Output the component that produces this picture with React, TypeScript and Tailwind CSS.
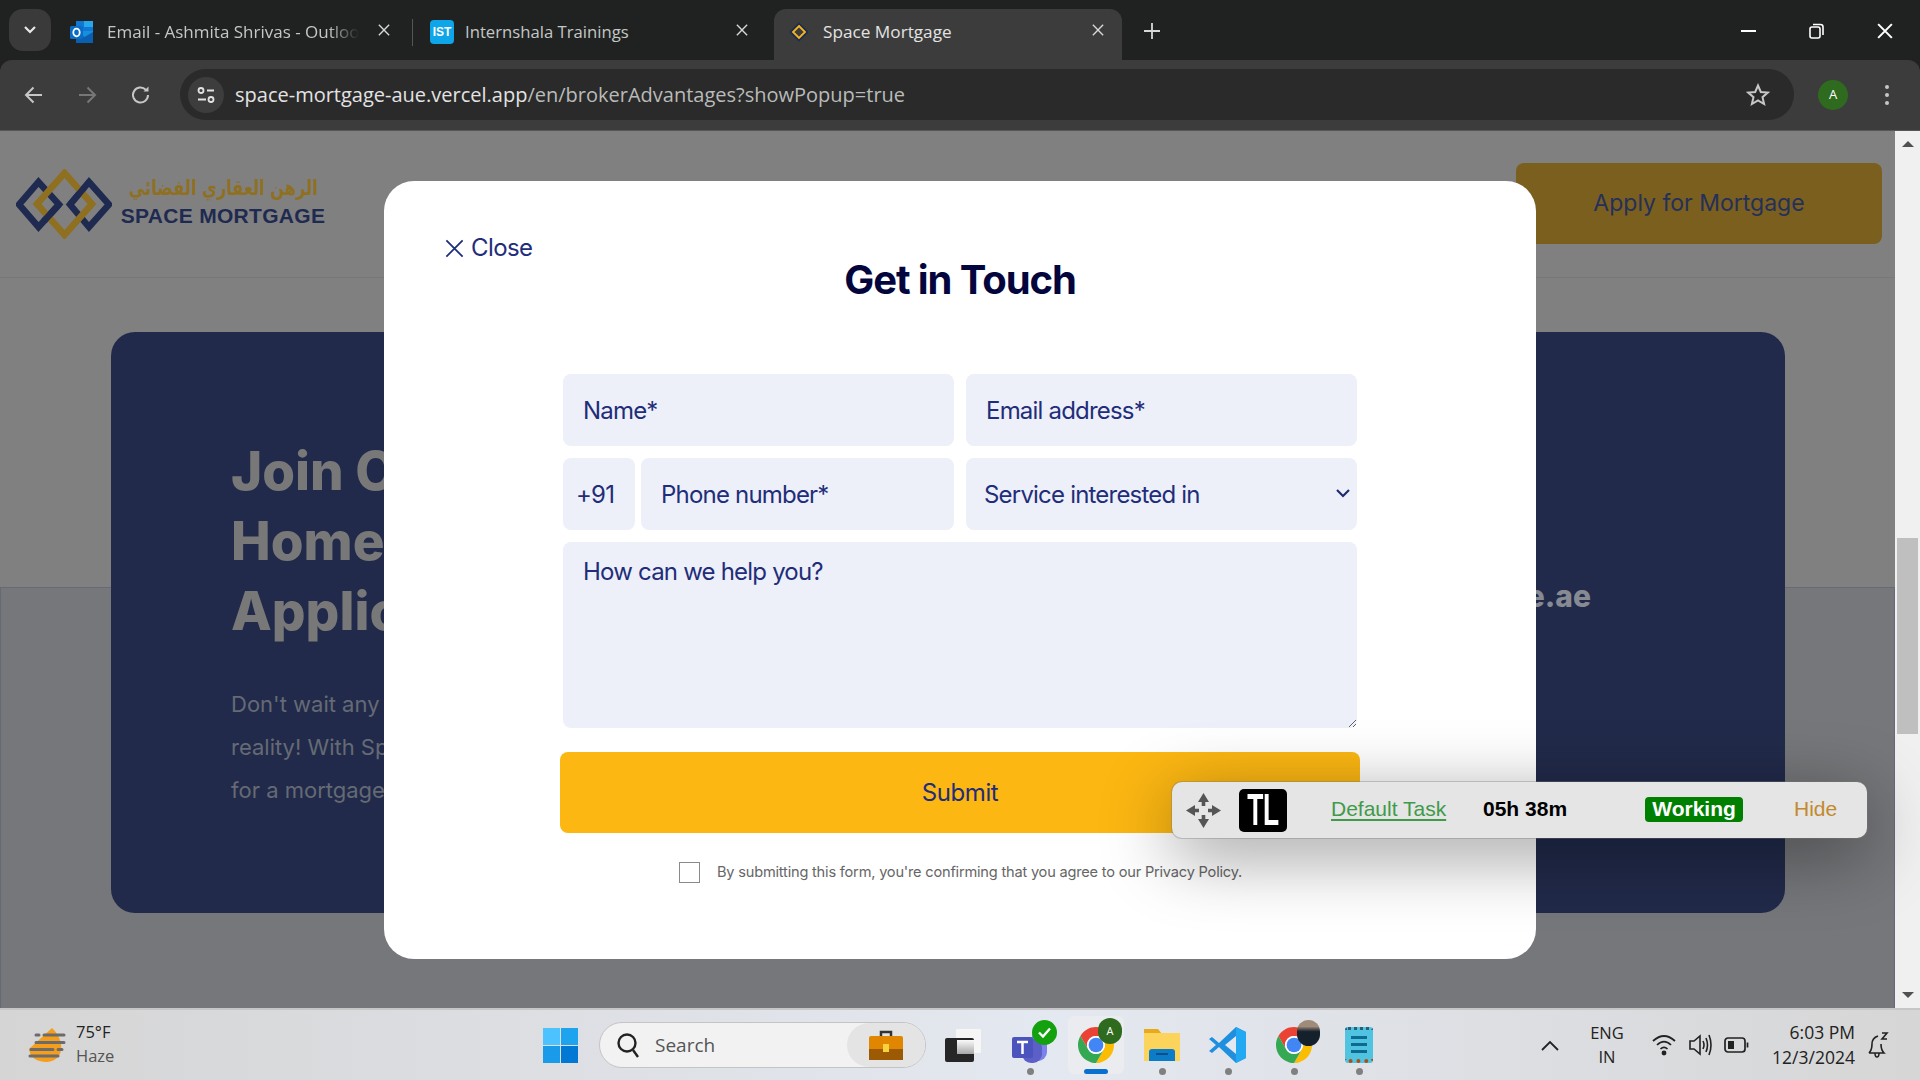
import React from "react";

const ui = "font-['Open_Sans','Noto_Sans',sans-serif]";

function Chrome({ size = 36 }: { size?: number }) {
  return (
    <svg width={size} height={size} viewBox="2 2 44 44">
      <path fill="#EA4335" d="M4.95 13A22 22 0 0 1 43.05 13L24 13A11 11 0 0 0 14.47 29.5Z" />
      <path fill="#FBBC04" d="M43.05 13A22 22 0 0 1 24 46L33.53 29.5A11 11 0 0 0 24 13Z" />
      <path fill="#34A853" d="M24 46A22 22 0 0 1 4.95 13L14.47 29.5A11 11 0 0 0 33.53 29.5Z" />
      <circle cx="24" cy="24" r="11" fill="#fff" />
      <circle cx="24" cy="24" r="9" fill="#4285F4" />
    </svg>
  );
}

function X({ size = 14, color = "#d8d8d8", w = 1.6 }: { size?: number; color?: string; w?: number }) {
  return (
    <svg width={size} height={size} viewBox="0 0 14 14" fill="none" stroke={color} strokeWidth={w}>
      <path d="M1 1 13 13M13 1 1 13" />
    </svg>
  );
}

function Outlook() {
  return (
    <svg width="26" height="26" viewBox="0 0 26 26">
      <rect x="7" y="2" width="17" height="11" fill="#0f78d4" />
      <rect x="15" y="2" width="9" height="6" fill="#28a8ea" />
      <path d="M7 12 24 12 24 23 7 23Z" fill="#1490df" />
      <path d="M7 13 15.5 18 24 13 24 24 7 24Z" fill="#0a5fb0" />
      <rect x="1" y="7" width="13" height="13" rx="1.5" fill="#0a6cc4" />
      <ellipse cx="7.5" cy="13.5" rx="3.2" ry="3.8" fill="none" stroke="#fff" strokeWidth="1.8" />
    </svg>
  );
}

function Tabs() {
  return (
    <div className={`flex h-[60px] shrink-0 items-end bg-[#202222] pl-[9px] ${ui}`}>
      <div className="mb-[9px] flex h-[42px] w-[42px] items-center justify-center rounded-[14px] bg-[#3a3a3a]">
        <svg width="14" height="10" viewBox="0 0 14 10" fill="none" stroke="#e8e8e8" strokeWidth="2.2">
          <path d="M2 2 7 7 12 2" />
        </svg>
      </div>
      <div className="flex h-[51px] w-[361px] items-center pb-[6px] pl-[18px]">
        <div className="flex items-center gap-[12px]">
          <Outlook />
          <span className="w-[252px] overflow-hidden text-[17px] whitespace-nowrap text-[#c4c7c5] [mask-image:linear-gradient(to_right,black_88%,transparent)]">
            Email - Ashmita Shrivas - Outlook
          </span>
        </div>
        <div className="mb-[3px] ml-[19px]"><X size={12} /></div>
      </div>
      <div className="mb-[14px] h-[27px] w-px bg-[#555]" />
      <div className="flex h-[51px] w-[361px] items-center pb-[6px] pl-[17px]">
        <div className="flex h-[24px] w-[24px] items-center justify-center rounded-[4px] bg-[#0ea5e9] text-[12px] font-bold text-white font-['Liberation_Sans',sans-serif]">
          IST
        </div>
        <span className="ml-[11px] w-[271px] text-[16.700px] whitespace-nowrap text-[#c4c7c5]">Internshala Trainings</span>
        <div className="mb-[3px]"><X size={12} /></div>
      </div>
      <div className="flex h-[51px] w-[348px] items-center rounded-t-[12px] bg-[#3c3c3c] pb-[6px] pl-[15px]">
        <svg width="20" height="20" viewBox="0 0 20 20" fill="none">
          <path d="M10 2 18 10 10 18 2 10Z" stroke="#1f2a50" strokeWidth="2.4" />
          <path d="M10 4 16 10 10 16 4 10Z" stroke="#f2b71e" strokeWidth="1.8" />
        </svg>
        <span className="ml-[14px] w-[269px] text-[17.200px] whitespace-nowrap text-[#e3e3e3]">Space Mortgage</span>
        <div className="mb-[3px]"><X size={12} /></div>
      </div>
      <div className="mb-[21px] ml-[22px]">
        <svg width="16" height="16" viewBox="0 0 16 16" stroke="#d8d8d8" strokeWidth="1.8">
          <path d="M8 0V16M0 8H16" />
        </svg>
      </div>
      <div className="mb-[21px] ml-auto flex items-center pr-[27px]">
        <div className="h-[2px] w-[15px] bg-white" />
        <svg className="ml-[53px]" width="15" height="16" viewBox="0 0 15 16" fill="none" stroke="#fff" strokeWidth="1.6">
          <rect x="1" y="4" width="10" height="11" rx="2" />
          <path d="M4 1.5H11.5A2.5 2.5 0 0 1 14 4V12" />
        </svg>
        <div className="ml-[53px]"><X size={16} color="#fff" w={1.8} /></div>
      </div>
    </div>
  );
}

function Toolbar() {
  return (
    <div className={`flex h-[71px] shrink-0 items-start rounded-t-[12px] border-b border-[#565656] bg-[#3c3c3c] ${ui}`}>
      <div className="flex h-[69px] w-[180px] items-center pl-[24px]">
        <svg width="20" height="20" viewBox="0 0 20 20" fill="none" stroke="#c7c7c7" strokeWidth="2">
          <path d="M18 10H2M9.500 2.500 2 10 9.500 17.500" />
        </svg>
        <svg className="ml-[33px]" width="20" height="20" viewBox="0 0 20 20" fill="none" stroke="#777" strokeWidth="2">
          <path d="M2 10H18M10.500 2.500 18 10 10.500 17.500" />
        </svg>
        <svg className="ml-[34px]" width="20" height="20" viewBox="0 0 20 20" fill="none" stroke="#c7c7c7" strokeWidth="2">
          <path d="M17 10A7.500 7.500 0 1 1 14.800 4.700" />
          <path d="M17.500 1.500V6.500H12.500Z" fill="#c7c7c7" stroke="none" />
        </svg>
      </div>
      <div className="mt-[9px] flex h-[51px] w-[1614px] items-center rounded-full bg-[#2a2a2a] pl-[8px] pr-[24px]">
        <div className="flex h-[36px] w-[36px] items-center justify-center rounded-full bg-[#3d3d3d]">
          <svg width="20" height="18" viewBox="0 0 20 18" fill="none" stroke="#e3e3e3" strokeWidth="1.8">
            <circle cx="5" cy="4.500" r="2.500" />
            <path d="M11 4.500H18M2 13.500H10" />
            <circle cx="15" cy="13.500" r="2.500" />
          </svg>
        </div>
        <div className="ml-[11px] text-[20px] whitespace-nowrap text-[#e3e3e3]">
          space-mortgage-aue.vercel.app<span className="text-[#b9bbb9]">/en/brokerAdvantages?showPopup=true</span>
        </div>
        <svg className="ml-auto" width="24" height="24" viewBox="0 0 24 24" fill="none" stroke="#c7c7c7" strokeWidth="2">
          <path d="M12 2.500 14.800 9 21.800 9.600 16.500 14.200 18.100 21 12 17.400 5.900 21 7.500 14.200 2.200 9.600 9.200 9Z" />
        </svg>
      </div>
      <div className="mt-[20px] ml-[24px] flex h-[30px] w-[30px] items-center justify-center rounded-full bg-[#2f6b1f] text-[13px] text-white">A</div>
      <div className="mt-[25px] ml-[37px] flex flex-col gap-[4px]">
        <div className="h-[4px] w-[4px] rounded-full bg-[#c7c7c7]" />
        <div className="h-[4px] w-[4px] rounded-full bg-[#c7c7c7]" />
        <div className="h-[4px] w-[4px] rounded-full bg-[#c7c7c7]" />
      </div>
    </div>
  );
}

function Logo() {
  return (
    <div className="flex items-center">
      <svg width="96" height="70" viewBox="0 0 96 70" fill="none" strokeWidth="6.500">
        <path d="M22.500 13 43 35.500 22.500 58 3 35.500Z" stroke="#1f2a50" />
        <path d="M73 13 93 35.500 73 58 54 35.500Z" stroke="#1f2a50" />
        <path d="M48.500 4 76 35 48.500 66 21 35Z" stroke="#8f6f20" />
        <path d="M43 35.500 28 52" stroke="#1f2a50" />
        <path d="M54 35.500 68 19" stroke="#1f2a50" />
      </svg>
      <div className="-mt-[8px] ml-[9px] flex w-[204px] flex-col items-center">
        <div dir="rtl" className="flex h-[31px] w-[204px] scale-x-[0.77] justify-center text-[21px] leading-[30px] font-bold whitespace-nowrap text-[#8f6f20] font-['DejaVu_Sans',sans-serif]">
          الرهن العقاري الفضائي
        </div>
        <div className="text-[21px] leading-[24px] font-bold tracking-[0.3px] whitespace-nowrap text-[#1f2a50] font-['Liberation_Sans',sans-serif]">
          SPACE MORTGAGE
        </div>
      </div>
    </div>
  );
}

const field =
  "h-[72px] rounded-lg bg-[#edf0f8] px-[20px] text-[24px] text-[#1f2d7a] outline-none placeholder:text-[#1f2d7a] font-['Inter',sans-serif] tracking-[-0.8px]";

function Modal() {
  return (
    <div className="absolute top-[50px] left-[384px] flex h-[778px] w-[1152px] flex-col rounded-[30px] bg-white font-['Inter',sans-serif]">
      <div className="mt-[49px] ml-[61px] flex h-[36px] items-center text-[24px] tracking-[-0.6px] text-[#1f2d7a]">
        <X size={19} color="#1f2d7a" w={1.3} />
        <span className="ml-[7px]">Close</span>
      </div>
      <h2 className="-mt-[10px] text-center text-[40px] leading-[48px] font-bold tracking-[-1.1px] text-[#03063d]">Get in Touch</h2>
      <form className="mt-[70px] ml-[179px] flex w-[794px] flex-col gap-[12px]">
        <div className="flex gap-[12px]">
          <input className={`${field} w-[391px]`} placeholder="Name*" />
          <input className={`${field} w-[391px]`} placeholder="Email address*" />
        </div>
        <div className="flex gap-[12px]">
          <div className="flex w-[391px] gap-[6px]">
            <div className={`${field} flex w-[72px] items-center !px-[13px] pt-[2px]`}>+91</div>
            <input className={`${field} w-[313px] pt-[1px]`} placeholder="Phone number*" />
          </div>
          <div className="relative w-[391px]">
            <select className={`${field} w-[391px] appearance-none !pl-[18px] pt-[2px]`} defaultValue="s">
              <option value="s">Service interested in</option>
            </select>
            <svg className="absolute top-[31px] right-[7px]" width="14" height="9" viewBox="0 0 14 9" fill="none" stroke="#1f2d6e" strokeWidth="2.200">
              <path d="M1 1 7 7 13 1" />
            </svg>
          </div>
        </div>
        <textarea className={`${field} !h-[186px] w-[794px] !pt-[15px] leading-[30px]`} placeholder="How can we help you?" />
        <button type="button" className="mt-[12px] -ml-[3px] h-[81px] w-[800px] rounded-lg bg-[#fcb712] text-[24px] tracking-[-0.4px] text-[#1f2d7a]">
          Submit
        </button>
        <div className="mt-[17px] flex items-center pl-[116px]">
          <div className="h-[21px] w-[21px] border border-[#8a8a8a] bg-white" />
          <span className="ml-[17px] text-[14.600px] tracking-[-0.2px] text-[#666]">By submitting this form, you're confirming that you agree to our Privacy Policy.</span>
        </div>
      </form>
    </div>
  );
}

function Widget() {
  return (
    <div className="absolute top-[651px] left-[1172px] flex h-[56px] w-[695px] items-center rounded-[10px] bg-[#e5e5e5] shadow-[0_0_0_1px_rgba(120,120,120,0.35),0_16px_70px_rgba(0,0,0,0.42)] font-['Liberation_Sans',sans-serif]">
      <svg className="ml-[14px]" width="35" height="35" viewBox="0 0 35 35" fill="#555">
        <path d="M17.500 0 23 9H19.300V13H15.700V9H12Z" />
        <path d="M17.500 35 12 26H15.700V22H19.300V26H23Z" />
        <path d="M0 17.500 9 12V15.700H13V19.300H9V23Z" />
        <path d="M35 17.500 26 23V19.300H22V15.700H26V12Z" />
      </svg>
      <div className="ml-[18px] flex h-[43px] w-[48px] items-center justify-center overflow-hidden rounded-[5px] bg-black text-[44px] leading-[44px] font-bold text-white">
        <span className="scale-x-[0.6] tracking-[-1px]">TL</span>
      </div>
      <span className="mb-[3px] ml-[44px] w-[152px] text-[21px] text-[#3f9a4a] underline underline-offset-[3px]">Default Task</span>
      <span className="mb-[3px] w-[162px] text-[21px] font-bold whitespace-nowrap text-black">05h 38m</span>
      <span className="mb-[2px] flex h-[25px] w-[98px] items-center justify-center rounded-[4px] bg-[#008000] text-[21px] font-bold text-white">Working</span>
      <span className="mb-[3px] ml-[51px] text-[21px] text-[#c28a2c]">Hide</span>
    </div>
  );
}

function Page() {
  return (
    <main className="relative flex min-h-0 flex-1 overflow-hidden bg-[#808080]">
      <div className="relative flex min-w-0 flex-1 flex-col">
        <div className="absolute inset-x-0 top-[456px] bottom-0 border-t border-l border-r border-[#666a78] bg-[#76777a]" />
        <header className="relative flex h-[147px] shrink-0 items-center justify-between border-b border-[#787878] pr-[13px] pl-[16px]">
          <Logo />
          <div className="mb-[1px] flex h-[81px] w-[366px] items-center justify-center rounded-lg bg-[#7b5f1f] text-[23px] text-[#25305a] font-['Inter',sans-serif]">
            Apply for Mortgage
          </div>
        </header>
        <section className="relative mt-[54px] ml-[111px] flex h-[581px] w-[1674px] justify-between rounded-[24px] bg-[#212a4a] pt-[104px] pr-[194px] pl-[120px]">
          <div>
            <div className="text-[53px] leading-[70px] font-extrabold whitespace-nowrap text-[#787878] font-['Inter',sans-serif]">
              Join Our<br />Homeownership<br />Application
            </div>
            <div className="mt-[37px] text-[22px] leading-[43px] whitespace-nowrap text-[#656a75] font-['Inter',sans-serif]">
              Don't wait any longer<br />reality! With Space<br />for a mortgage
            </div>
          </div>
          <div className="mt-[142px] text-[30px] leading-[36px] font-extrabold text-[#878a93] font-['Inter',sans-serif]">space.ae</div>
        </section>
      </div>
      <div className="flex w-[25px] shrink-0 flex-col items-center bg-[#f0f0f0] pt-[10px]">
        <div className="h-0 w-0 border-x-[6px] border-b-[6px] border-x-transparent border-b-[#505050]" />
        <div className="mt-[391px] h-[196px] w-[21px] bg-[#bfbfbf]" />
        <div className="mt-[258px] h-0 w-0 border-x-[6px] border-t-[6px] border-x-transparent border-t-[#505050]" />
      </div>
      <Modal />
      <Widget />
    </main>
  );
}

function Dot() {
  return <div className="mt-[5px] h-[7px] w-[7px] rounded-full bg-[#808080]" />;
}

function Taskbar() {
  return (
    <footer className={`flex h-[72px] shrink-0 items-center border-t-[2px] border-[#c6c6c6] bg-gradient-to-r from-[#d5d5d5] via-[#e4e8f0] via-55% to-[#d6d6d6] ${ui}`}>
      <svg className="ml-[28px]" width="38" height="36" viewBox="0 0 38 36">
        <path d="M24 1C38 14 36 34 19 35C8 35 2 30 1 22Z" fill="#f59e1b" />
        <g stroke="#6b6b6b" strokeWidth="3" strokeLinecap="round">
          <path d="M8 8H11M16 8H36M8 15.500H36M3 22.500H25M30 22.500H34M2 29H30" />
        </g>
      </svg>
      <div className="mb-[2px] ml-[10px] flex w-[100px] flex-col text-[16.500px] leading-[24px]">
        <span className="text-[#222]">75°F</span>
        <span className="text-[#555]">Haze</span>
      </div>
      <svg className="ml-[367px]" width="35" height="35" viewBox="0 0 35 35">
        <rect width="17" height="17" fill="#4cc2ff" />
        <rect x="18" width="17" height="17" fill="#1ea3ee" />
        <rect y="18" width="17" height="17" fill="#1a9bea" />
        <rect x="18" y="18" width="17" height="17" fill="#0078d4" />
      </svg>
      <div className="ml-[21px] flex h-[46px] w-[327px] items-center rounded-full border border-[#c4c4c4] bg-[#f2f2f2] pl-[16px]">
        <svg width="24" height="26" viewBox="0 0 24 26" fill="none" stroke="#222" strokeWidth="2.400">
          <circle cx="11" cy="11" r="8.500" />
          <path d="M17 18 22 25" />
        </svg>
        <span className="ml-[15px] text-[19px] text-[#555]">Search</span>
        <div className="ml-auto flex h-[44px] w-[78px] items-center justify-center rounded-full bg-[#e4e4e4]">
          <svg width="34" height="30" viewBox="0 0 34 30">
            <path d="M12 6V2H22V6" fill="none" stroke="#333" strokeWidth="2.500" />
            <rect y="6" width="34" height="24" rx="2" fill="#e08600" />
            <rect y="19" width="34" height="11" fill="#9c5a05" />
            <rect x="14" y="14" width="6" height="8" fill="#f6d23c" />
          </svg>
        </div>
      </div>
      <svg className="ml-[19px]" width="36" height="33" viewBox="0 0 36 33">
        <defs>
          <linearGradient id="wk" x1="0" y1="0" x2="0" y2="1">
            <stop offset="0" stopColor="#fafafa" />
            <stop offset="1" stopColor="#a8a8a8" />
          </linearGradient>
        </defs>
        <rect x="11" y="0" width="25" height="24" rx="1" fill="#f6f6f6" />
        <rect x="0" y="9" width="29" height="24" rx="2" fill="#262626" />
        <rect x="12" y="11" width="17" height="14" fill="url(#wk)" />
      </svg>
      <div className="relative mt-[11px] ml-[31px] flex flex-col items-center">
        <svg width="36" height="36" viewBox="0 0 36 36">
          <circle cx="27" cy="10" r="7" fill="#7b83eb" />
          <rect x="13" y="10" width="22" height="24" rx="9" fill="#7b83eb" />
          <rect x="10" y="12" width="20" height="24" rx="9" fill="#5b5fc7" />
          <rect x="0" y="10" width="21" height="21" rx="2" fill="#4b53bc" />
          <path d="M5 15H16M10.500 15V27" stroke="#fff" strokeWidth="2.500" />
        </svg>
        <div className="absolute -top-[7px] left-[20px] flex h-[25px] w-[25px] items-center justify-center rounded-full bg-[#13a10e]">
          <svg width="13" height="11" viewBox="0 0 13 11" fill="none" stroke="#fff" strokeWidth="2.400"><path d="M1 5.500 5 9.500 12 1.500" /></svg>
        </div>
        <Dot />
      </div>
      <div className="relative ml-[20px] flex h-[58px] w-[56px] flex-col items-center justify-center rounded-[6px] bg-[#eaecef]">
        <Chrome />
        <div className="absolute top-[2px] left-[30px] flex h-[26px] w-[24px] items-center justify-center rounded-full bg-[#2f6b1f] text-[11px] text-white">A</div>
        <div className="absolute bottom-0 left-[16px] h-[5px] w-[24px] rounded-full bg-[#0a70d0]" />
      </div>
      <div className="mt-[11px] ml-[20px] flex flex-col items-center">
        <svg width="36" height="36" viewBox="0 0 36 36">
          <path d="M0 2H14L18 7H36V34H0Z" fill="#e8a91a" />
          <rect y="6" width="36" height="28" fill="#fcd45c" />
          <path d="M5 25Q5 22 8 22H28Q31 22 31 25V34H5Z" fill="#0a7cc8" />
          <rect x="12" y="26" width="12" height="2" fill="#0a4f8a" />
        </svg>
        <Dot />
      </div>
      <div className="mt-[11px] ml-[29px] flex flex-col items-center">
        <svg width="38" height="36" viewBox="0 0 38 36">
          <path d="M27 0 37 5V31L27 36 10 20 3 26 0 24 7 18 0 12 3 10 10 16Z" fill="#1f8fe0" />
          <path d="M27 9 16 18 27 27Z" fill="#e4e8f0" />
          <path d="M27 0 37 5V31L27 36Z" fill="#23a9f2" />
        </svg>
        <Dot />
      </div>
      <div className="relative mt-[11px] ml-[29px] flex flex-col items-center">
        <Chrome />
        <div className="absolute -top-[7px] left-[21px] h-[26px] w-[23px] rounded-full bg-gradient-to-b from-[#a08a78] from-25% to-[#14202c] to-45%" />
        <Dot />
      </div>
      <div className="mt-[11px] ml-[33px] flex flex-col items-center">
        <div className="flex h-[36px] w-[28px] flex-col justify-center gap-[4px] rounded-[3px] border-t-[3px] border-b-[4px] border-dotted border-t-[#2a5f7a] border-b-[#a5521a] bg-[#4fc3e0] px-[6px]">
          <div className="h-[3px] bg-[#0f6a92]" />
          <div className="h-[3px] bg-[#0f6a92]" />
          <div className="h-[3px] bg-[#0f6a92]" />
        </div>
        <Dot />
      </div>
      <svg className="ml-[168px]" width="18" height="11" viewBox="0 0 18 11" fill="none" stroke="#222" strokeWidth="1.800">
        <path d="M1 10 9 2 17 10" />
      </svg>
      <div className="ml-[30px] flex w-[36px] flex-col items-center text-[16.500px] leading-[24px] text-[#222]">
        <span>ENG</span>
        <span>IN</span>
      </div>
      <svg className="ml-[27px]" width="24" height="22" viewBox="0 0 24 22" fill="none" stroke="#222" strokeWidth="1.700">
        <path d="M1 7Q12 -3 23 7M5 11Q12 4 19 11M8.500 15Q12 11.500 15.500 15" />
        <circle cx="12" cy="19" r="1.600" fill="#222" />
      </svg>
      <svg className="ml-[12px]" width="25" height="24" viewBox="0 0 25 24" fill="none" stroke="#222" strokeWidth="1.600">
        <path d="M2 8H6L12 3V21L6 16H2Z" />
        <path d="M15 8Q17 12 15 16M18 5Q21 12 18 19M21 2Q25 12 21 22" />
      </svg>
      <svg className="ml-[11px]" width="25" height="16" viewBox="0 0 25 16" fill="none" stroke="#222" strokeWidth="1.700">
        <rect x="1" y="1" width="20" height="14" rx="3" />
        <rect x="4" y="4" width="6" height="8" fill="#222" stroke="none" />
        <path d="M23.500 5.500V10.500" />
      </svg>
      <div className="ml-[23px] flex w-[83px] flex-col items-end text-[17.500px] leading-[25px] whitespace-nowrap text-[#222]">
        <span>6:03 PM</span>
        <span>12/3/2024</span>
      </div>
      <svg className="ml-[12px]" width="22" height="30" viewBox="0 0 22 30" fill="none" stroke="#222" strokeWidth="1.600">
        <path d="M2 23Q5 20 5 14T11 6M2 23H17Q14 20 14 14M8 23Q8 27 10 27T12 23" />
        <path d="M15 3H20L15 9H20" />
      </svg>
    </footer>
  );
}

export default function App() {
  return (
    <div className="flex h-screen w-screen flex-col overflow-hidden bg-[#202222]">
      <Tabs />
      <Toolbar />
      <Page />
      <Taskbar />
    </div>
  );
}
